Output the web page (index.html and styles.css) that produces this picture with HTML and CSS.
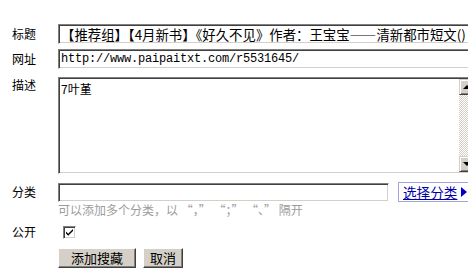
FILE: index.html
```html
<!DOCTYPE html>
<html lang="zh-CN">
<head>
  <meta charset="UTF-8" />
  <title>添加搜藏</title>
  <link rel="stylesheet" href="styles.css">
</head>
<body>
  <form class="form">
    <div class="row row-title">
      <label class="label">标题</label>
      <input class="field field-wide" type="text" value="【推荐组】【4月新书】《好久不见》作者：王宝宝——清新都市短文()">
    </div>

    <div class="row row-url">
      <label class="label">网址</label>
      <input class="field field-wide field-url" type="text" value="http://www.paipaitxt.com/r5531645/">
    </div>

    <div class="row row-desc">
      <label class="label label-top">描述</label>
      <div class="memo">
        <textarea class="memo-text">7叶堇</textarea>
        <div class="scrollbar">
          <span class="sb-btn"><i class="arrow-up"></i></span>
          <span class="sb-track"></span>
          <span class="sb-btn"><i class="arrow-down"></i></span>
        </div>
      </div>
    </div>

    <div class="row row-cat">
      <label class="label label-top label-cat">分类</label>
      <div class="cat-col">
        <div class="cat-line">
          <input class="field field-cat" type="text" value="">
          <a class="pick" href="#">选择分类<i class="pick-arrow"></i></a>
        </div>
        <div class="hint">可以添加多个分类，以 “，” “；” “、” 隔开</div>
      </div>
    </div>

    <div class="row row-public">
      <label class="label">公开</label>
      <span class="check">
        <svg width="9" height="9" viewBox="0 0 9 9"><path d="M1 3.5 L3.2 5.8 L8 1 L8 3 L3.2 7.8 L1 5.5 Z" fill="#000"/></svg>
      </span>
    </div>

    <div class="row row-actions">
      <span class="label"></span>
      <button type="button" class="btn btn-add">添加搜藏</button>
      <button type="button" class="btn btn-cancel">取消</button>
    </div>
  </form>
</body>
</html>
```

FILE: styles.css
```css
* {
  margin: 0;
  padding: 0;
  box-sizing: border-box;
}

body {
  background: #fff;
  font-family: "Noto Sans CJK SC", "Liberation Sans", sans-serif;
  font-size: 12px;
  color: #000;
  overflow: hidden;
  width: 468px;
  height: 278px;
}

.form {
  padding: 24px 0 0 12px;
  width: 468px;
  height: 278px;
  overflow: hidden;
}

.row {
  display: flex;
  align-items: center;
}

.label {
  width: 46px;
  flex: none;
  font-size: 12px;
  line-height: 14px;
}

.label-top {
  align-self: flex-start;
  padding-top: 1px;
}

.label-cat {
  padding-top: 3px;
}

/* classic sunken field */
.field {
  height: 20px;
  border: 1px solid;
  border-color: #808080 #fff #fff #808080;
  box-shadow: inset 1px 1px 0 #404040, inset -1px -1px 0 #d4d0c8;
  background: #fff;
  padding: 0 2px;
  font-family: "Noto Sans CJK SC", sans-serif;
  font-size: 13.4px;
  color: #000;
  outline: none;
}

.field-wide {
  width: 440px;
  flex: none;
}

.field-url {
  font-family: "Liberation Mono", monospace;
  font-size: 12px;
  letter-spacing: -0.2px;
}

.row-title {
  margin-bottom: 5px;
}

.row-url {
  margin-bottom: 8px;
}

.row-desc {
  margin-bottom: 8px;
}

.memo {
  display: flex;
  flex: none;
  width: 419px;
  height: 97px;
  border: 1px solid;
  border-color: #808080 #fff #fff #808080;
  box-shadow: inset 1px 1px 0 #404040, inset -1px -1px 0 #d4d0c8;
  padding: 1px;
  background: #fff;
}

.memo-text {
  flex: 1;
  border: none;
  resize: none;
  overflow: hidden;
  outline: none;
  padding: 2px 1px;
  font-family: "Noto Sans CJK SC", sans-serif;
  font-size: 12px;
  line-height: 15px;
  color: #000;
}

.scrollbar {
  width: 16px;
  flex: none;
  display: flex;
  flex-direction: column;
}

.sb-btn {
  height: 16px;
  flex: none;
  background: #d4d0c8;
  border: 1px solid;
  border-color: #d4d0c8 #404040 #404040 #d4d0c8;
  box-shadow: inset 1px 1px 0 #fff, inset -1px -1px 0 #808080;
  display: flex;
  align-items: center;
  justify-content: center;
}

.sb-track {
  flex: 1;
  background-color: #fff;
  background-image: repeating-conic-gradient(#d4d0c8 0 25%, #fff 0 50%);
  background-size: 2px 2px;
}

.arrow-up,
.arrow-down {
  width: 0;
  height: 0;
  border-left: 4px solid transparent;
  border-right: 4px solid transparent;
}

.arrow-up {
  border-bottom: 4px solid #000;
}

.arrow-down {
  border-top: 4px solid #000;
}

.cat-col {
  display: flex;
  flex-direction: column;
  flex: none;
}

.cat-line {
  display: flex;
  align-items: center;
}

.field-cat {
  width: 331px;
  height: 19px;
}

.pick {
  display: flex;
  align-items: center;
  margin-left: 9px;
  height: 20px;
  padding: 0 4px;
  border: 1px solid #a4a4dc;
  color: #0000a8;
  font-size: 13.6px;
  line-height: 16px;
  text-decoration: underline;
  white-space: nowrap;
}

.pick-arrow {
  display: inline-block;
  width: 0;
  height: 0;
  margin-left: 4px;
  border-top: 5px solid transparent;
  border-bottom: 5px solid transparent;
  border-left: 6px solid #0000c8;
}

.hint {
  color: #9c9c9c;
  font-size: 12px;
  line-height: 14px;
  margin-top: 1px;
  white-space: nowrap;
}

.row-cat {
  margin-bottom: 8px;
}

.check {
  width: 13px;
  height: 13px;
  margin-left: 5px;
  border: 1px solid;
  border-color: #808080 #fff #fff #808080;
  box-shadow: inset 1px 1px 0 #404040, inset -1px -1px 0 #d4d0c8;
  background: #fff;
  display: flex;
  align-items: center;
  justify-content: center;
}

.row-public {
  margin-bottom: 9px;
}

.btn {
  height: 20px;
  background: #d4d0c8;
  border: 1px solid;
  border-color: #fff #404040 #404040 #fff;
  box-shadow: inset -1px -1px 0 #808080;
  font-family: "Noto Sans CJK SC", sans-serif;
  font-size: 13px;
  line-height: 16px;
  color: #000;
}

.btn-add {
  width: 78px;
}

.btn-cancel {
  width: 40px;
  margin-left: 7px;
}
```
